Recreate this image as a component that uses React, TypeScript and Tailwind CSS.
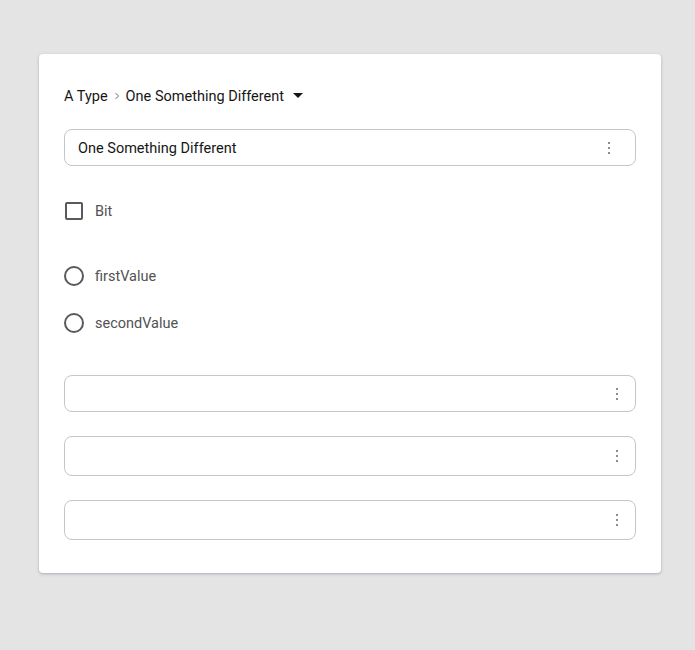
import { useState } from "react";

const font = { fontFamily: "Roboto, 'Noto Sans', sans-serif" };

function Kebab() {
  return (
    <svg width="4" height="14" viewBox="0 0 4 14" aria-hidden="true" className="text-[#8d8d8d]">
      <rect x="1" y="1" width="2" height="2" fill="currentColor" />
      <rect x="1" y="6" width="2" height="2" fill="currentColor" />
      <rect x="1" y="11" width="2" height="2" fill="currentColor" />
    </svg>
  );
}

function Field({ value, tall, narrow }: { value?: string; tall?: boolean; narrow?: boolean }) {
  return (
    <div
      className={
        "flex items-center justify-between rounded-lg border border-[#c6c6c6] bg-white pl-[13px] " +
        (tall ? "h-[40px] " : "h-[37px] ") +
        (narrow ? "pr-[16px]" : "pr-[24px]")
      }
    >
      <span className="pt-[2px] text-[14.5px] text-[#161616]">{value ?? ""}</span>
      <Kebab />
    </div>
  );
}

export default function App() {
  const [bit, setBit] = useState(false);
  const [choice, setChoice] = useState<string | null>(null);

  return (
    <div className="min-h-[650px] bg-[#e4e4e4] pt-[54px] pl-[39px]" style={font}>
      <div className="w-[622px] rounded-[4px] bg-white px-[25px] pt-[32px] pb-[33px] shadow-[0_1px_3px_rgba(60,70,100,0.35)]">
        {/* パンくず */}
        <div className="flex h-[20px] items-center text-[14.5px] text-[#161616]">
          <span className="pt-[2px]">A Type</span>
          <svg width="12" height="12" viewBox="0 0 12 12" className="mx-[3px] text-[#6f6f6f]" aria-hidden="true">
            <path d="M4.5 3l3 3-3 3" fill="none" stroke="currentColor" strokeWidth="1" />
          </svg>
          <span className="pt-[2px]">One Something Different</span>
          <svg width="10" height="6" viewBox="0 0 10 6" className="ml-[9px] text-[#161616]" aria-hidden="true">
            <path d="M0 0h10L5 5z" fill="currentColor" />
          </svg>
        </div>

        <div className="mt-[23px]">
          <Field value="One Something Different" />
        </div>

        {/* チェックボックス */}
        <label className="mt-[36px] flex h-[18px] cursor-pointer items-center gap-[12px]" onClick={() => setBit(!bit)}>
          <span className="ml-[1px] block h-[18px] w-[18px] rounded-[2px] border-2 border-[#5a5a5a]" />
          <span className="pt-[2px] text-[14.5px] text-[#525252]">Bit</span>
        </label>

        {/* ラジオ */}
        <div className="mt-[46px] flex flex-col gap-[27px]">
          {["firstValue", "secondValue"].map((v) => (
            <label key={v} className="flex h-[20px] cursor-pointer items-center gap-[11px]" onClick={() => setChoice(v)}>
              <span className="flex h-[20px] w-[20px] items-center justify-center rounded-full border-2 border-[#5a5a5a]">
                {choice === v ? <span className="h-[8px] w-[8px] rounded-full bg-[#5a5a5a]" /> : null}
              </span>
              <span className="pt-[2px] text-[14.5px] text-[#525252]">{v}</span>
            </label>
          ))}
        </div>

        <div className="mt-[42px] flex flex-col gap-[24px]">
          <Field narrow />
          <Field tall narrow />
          <Field tall narrow />
        </div>
      </div>
    </div>
  );
}
